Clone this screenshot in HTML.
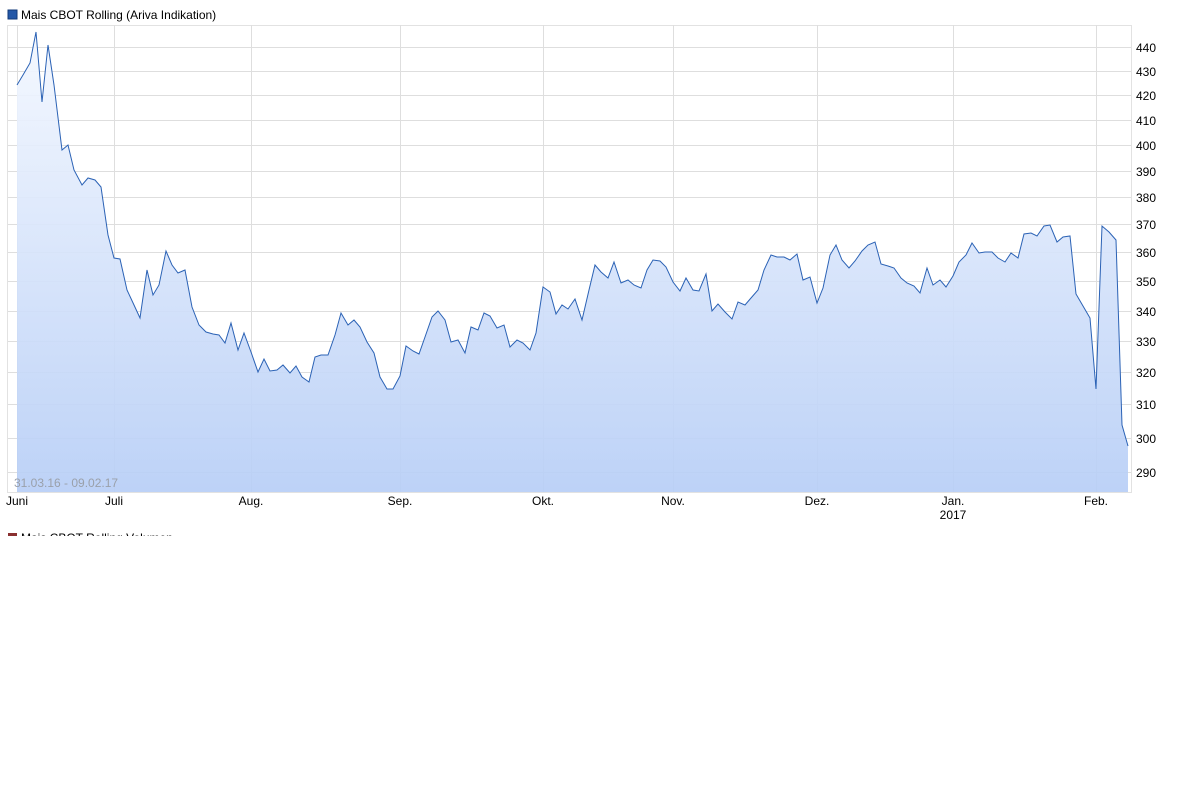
<!DOCTYPE html>
<html><head><meta charset="utf-8"><style>
body{margin:0;background:#fff;width:1190px;height:804px;overflow:hidden;font-family:"Liberation Sans",sans-serif}
</style></head><body>
<svg width="1190" height="804" style="position:absolute;left:0;top:0" font-family="Liberation Sans, sans-serif">
<defs><linearGradient id="g" x1="0" y1="0" x2="0" y2="1"><stop offset="0" stop-color="#f4f8ff"/><stop offset="1" stop-color="#b7cef6"/></linearGradient></defs>
<rect x="8" y="10" width="9" height="9" fill="#2458a8" stroke="#123a7a" stroke-width="1"/>
<text x="21" y="19" font-size="12" fill="#000">Mais CBOT Rolling (Ariva Indikation)</text>
<rect x="7.5" y="25.5" width="1124" height="467" fill="none" stroke="#e2e2e2"/>
<g stroke="#dedede" stroke-width="1">
<line x1="8" x2="1131" y1="47.5" y2="47.5"/><line x1="8" x2="1131" y1="71.5" y2="71.5"/><line x1="8" x2="1131" y1="95.5" y2="95.5"/><line x1="8" x2="1131" y1="120.5" y2="120.5"/><line x1="8" x2="1131" y1="145.5" y2="145.5"/><line x1="8" x2="1131" y1="171.5" y2="171.5"/><line x1="8" x2="1131" y1="197.5" y2="197.5"/><line x1="8" x2="1131" y1="224.5" y2="224.5"/><line x1="8" x2="1131" y1="252.5" y2="252.5"/><line x1="8" x2="1131" y1="281.5" y2="281.5"/><line x1="8" x2="1131" y1="311.5" y2="311.5"/><line x1="8" x2="1131" y1="341.5" y2="341.5"/><line x1="8" x2="1131" y1="372.5" y2="372.5"/><line x1="8" x2="1131" y1="404.5" y2="404.5"/><line x1="8" x2="1131" y1="438.5" y2="438.5"/><line x1="8" x2="1131" y1="472.5" y2="472.5"/>
<line x1="17.5" x2="17.5" y1="25" y2="492"/><line x1="114.5" x2="114.5" y1="25" y2="492"/><line x1="251.5" x2="251.5" y1="25" y2="492"/><line x1="400.5" x2="400.5" y1="25" y2="492"/><line x1="543.5" x2="543.5" y1="25" y2="492"/><line x1="673.5" x2="673.5" y1="25" y2="492"/><line x1="817.5" x2="817.5" y1="25" y2="492"/><line x1="953.5" x2="953.5" y1="25" y2="492"/><line x1="1096.5" x2="1096.5" y1="25" y2="492"/>
</g>
<polygon fill="url(#g)" opacity="0.92" points="17,492 17,85 23,75 30,63 36,32 42,102 48,45 54,85 62,150 68,145 74,170 82,185 88,178 95,180 101,187 108,235 114,258 120,259 127,290 134,305 140,318 147,270 153,295 159,285 166,251 172,265 178,273 185,270 192,307 199,325 206,332 213,334 219,335 225,343 231,323 238,350 244,333 251,352 258,372 264,359 270,371 277,370 283,365 290,373 296,366 302,377 309,382 315,357 321,355 328,355 335,335 341,313 348,325 354,320 360,327 367,342 374,353 380,377 387,389 393,389 400,376 406,346 413,351 419,354 425,337 432,317 438,311 445,320 451,342 458,340 465,353 471,327 478,330 484,313 490,316 497,328 504,325 510,347 517,340 523,343 530,350 536,333 543,287 550,292 556,314 562,305 568,309 575,299 582,320 589,290 595,265 601,272 608,278 614,262 621,283 628,280 634,285 641,288 647,270 653,260 660,261 666,267 673,282 680,291 686,278 693,290 699,291 706,274 712,311 718,304 725,312 732,319 738,302 745,305 751,298 758,290 764,270 771,255 777,257 784,257 790,260 797,254 803,280 810,277 817,303 823,288 830,255 836,245 842,260 849,268 855,261 862,251 868,245 875,242 881,264 888,266 894,268 901,278 907,283 914,286 920,293 927,268 933,285 940,280 946,287 953,276 959,262 966,255 972,243 979,253 985,252 992,252 998,258 1005,262 1011,253 1018,258 1024,234 1031,233 1037,236 1044,226 1050,225 1057,242 1063,237 1070,236 1076,294 1083,306 1090,318 1096,389 1102,226 1109,232 1116,240 1122,425 1128,446 1128,492"/>
<polyline fill="none" stroke="#2b62b5" stroke-width="1" points="17,85 23,75 30,63 36,32 42,102 48,45 54,85 62,150 68,145 74,170 82,185 88,178 95,180 101,187 108,235 114,258 120,259 127,290 134,305 140,318 147,270 153,295 159,285 166,251 172,265 178,273 185,270 192,307 199,325 206,332 213,334 219,335 225,343 231,323 238,350 244,333 251,352 258,372 264,359 270,371 277,370 283,365 290,373 296,366 302,377 309,382 315,357 321,355 328,355 335,335 341,313 348,325 354,320 360,327 367,342 374,353 380,377 387,389 393,389 400,376 406,346 413,351 419,354 425,337 432,317 438,311 445,320 451,342 458,340 465,353 471,327 478,330 484,313 490,316 497,328 504,325 510,347 517,340 523,343 530,350 536,333 543,287 550,292 556,314 562,305 568,309 575,299 582,320 589,290 595,265 601,272 608,278 614,262 621,283 628,280 634,285 641,288 647,270 653,260 660,261 666,267 673,282 680,291 686,278 693,290 699,291 706,274 712,311 718,304 725,312 732,319 738,302 745,305 751,298 758,290 764,270 771,255 777,257 784,257 790,260 797,254 803,280 810,277 817,303 823,288 830,255 836,245 842,260 849,268 855,261 862,251 868,245 875,242 881,264 888,266 894,268 901,278 907,283 914,286 920,293 927,268 933,285 940,280 946,287 953,276 959,262 966,255 972,243 979,253 985,252 992,252 998,258 1005,262 1011,253 1018,258 1024,234 1031,233 1037,236 1044,226 1050,225 1057,242 1063,237 1070,236 1076,294 1083,306 1090,318 1096,389 1102,226 1109,232 1116,240 1122,425 1128,446"/>
<text x="14" y="487" font-size="12" fill="#9aa0aa">31.03.16 - 09.02.17</text>
<g font-size="12" fill="#000">
<text x="1136" y="52">440</text><text x="1136" y="76">430</text><text x="1136" y="100">420</text><text x="1136" y="125">410</text><text x="1136" y="150">400</text><text x="1136" y="176">390</text><text x="1136" y="202">380</text><text x="1136" y="229">370</text><text x="1136" y="257">360</text><text x="1136" y="286">350</text><text x="1136" y="316">340</text><text x="1136" y="346">330</text><text x="1136" y="377">320</text><text x="1136" y="409">310</text><text x="1136" y="443">300</text><text x="1136" y="477">290</text>
<text x="17" y="505" text-anchor="middle">Juni</text><text x="114" y="505" text-anchor="middle">Juli</text><text x="251" y="505" text-anchor="middle">Aug.</text><text x="400" y="505" text-anchor="middle">Sep.</text><text x="543" y="505" text-anchor="middle">Okt.</text><text x="673" y="505" text-anchor="middle">Nov.</text><text x="817" y="505" text-anchor="middle">Dez.</text><text x="953" y="505" text-anchor="middle">Jan.</text><text x="953" y="519" text-anchor="middle">2017</text><text x="1096" y="505" text-anchor="middle">Feb.</text>
</g>
<svg x="0" y="528" width="300" height="8"><rect x="8" y="5" width="9" height="9" fill="#8a3030"/><text x="21" y="14" font-size="12" fill="#000">Mais CBOT Rolling Volumen</text></svg>
</svg>
</body></html>
